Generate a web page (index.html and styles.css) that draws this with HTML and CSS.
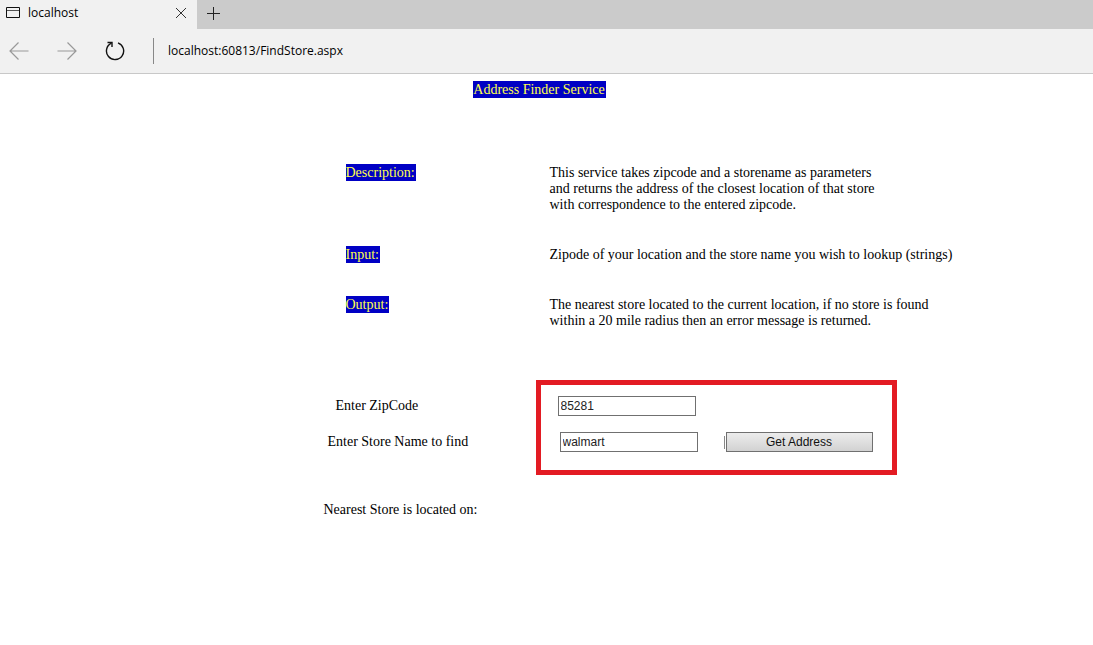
FILE: index.html
```html
<!DOCTYPE html>
<html lang="en">
<head>
<meta charset="utf-8">
<title>localhost</title>
<link rel="stylesheet" href="styles.css">
</head>
<body>
<header class="browser">
  <div class="tabs">
    <div class="tab">
      <svg class="tab-icon" width="14" height="12" viewBox="0 0 14 12" fill="none" stroke="#111"><path d="M.5.5h13v10H.5z"/><path d="M1 3.500h12" stroke="#555"/></svg>
      <span class="tab-title">localhost</span>
      <button class="icon-button" type="button" aria-label="Close tab"><svg width="12" height="12" viewBox="0 0 12 12" fill="none" stroke="#333"><path d="M1 1l10 10M11 1L1 11"/></svg></button>
    </div>
    <button class="icon-button new-tab" type="button" aria-label="New tab"><svg width="13" height="13" viewBox="0 0 13 13" fill="none" stroke="#222"><path d="M0 6.500h13M6.500 0v13"/></svg></button>
  </div>
  <nav class="toolbar">
    <button class="icon-button" type="button" aria-label="Back"><svg width="20" height="18" viewBox="0 0 20 18" fill="none" stroke="#999" stroke-width="1.2"><path d="M19.500 9H1M9.500 .5L1 9l8.500 8.500"/></svg></button>
    <button class="icon-button" type="button" aria-label="Forward"><svg width="20" height="18" viewBox="0 0 20 18" fill="none" stroke="#999" stroke-width="1.2"><path d="M.5 9H19M10.500 .5L19 9l-8.500 8.500"/></svg></button>
    <button class="icon-button" type="button" aria-label="Refresh"><svg width="20" height="20" viewBox="0 0 20 20" fill="none" stroke="#111" stroke-width="1.400"><path d="M13 1.900A8.600 8.600 0 1 1 6.400 2.200"/><path d="M2.500 1.500H7V6"/></svg></button>
    <span class="address">localhost:60813/FindStore.aspx</span>
  </nav>
</header>
<main class="page">
  <h1 class="title"><span class="mark">Address Finder Service</span></h1>
  <div class="content">
    <dl class="details">
      <dt><span class="mark">Description:</span></dt>
      <dd>This service takes zipcode and a storename as parameters<br>and returns the address of the closest location of that store<br>with correspondence to the entered zipcode.</dd>
      <dt><span class="mark">Input:</span></dt>
      <dd>Zipode of your location and the store name you wish to lookup (strings)</dd>
      <dt><span class="mark">Output:</span></dt>
      <dd>The nearest store located to the current location, if no store is found<br>within a 20 mile radius then an error message is returned.</dd>
    </dl>
    <form class="lookup">
      <div class="labels">
        <label class="zip-label" for="zip">Enter ZipCode</label>
        <label class="store-label" for="store">Enter Store Name to find</label>
      </div>
      <div class="frame">
        <div class="row"><input class="field" id="zip" type="text" value="85281"></div>
        <div class="row store-row"><input class="field" id="store" type="text" value="walmart"><span class="divider"></span><button class="submit" type="button">Get Address</button></div>
      </div>
    </form>
    <p class="result">Nearest Store is located on:</p>
  </div>
</main>
</body>
</html>
```

FILE: styles.css
```css
* {
  box-sizing: border-box;
}

body {
  margin: 0;
  background: #fff;
  color: #000;
  font: 14px/16px "Liberation Serif", "Times New Roman", serif;
}

.browser {
  background: #f1f1f1;
  border-bottom: 1px solid #c8c8c8;
  font: 12px/18px "Open Sans", "Noto Sans", sans-serif;
}

.icon-button {
  display: flex;
  padding: 0;
  border: 0;
  background: none;
}

.tabs {
  display: flex;
  align-items: center;
  height: 29px;
  background: #cbcbcb;
}

.tab {
  display: flex;
  align-items: center;
  gap: 8px;
  width: 197px;
  height: 29px;
  padding: 0 10px 4px 6px;
  background: #f1f1f1;
}

.tab-title {
  flex: 1;
}

.new-tab {
  margin-left: 10px;
  padding-bottom: 2px;
}

.toolbar {
  display: flex;
  align-items: center;
  gap: 28px;
  height: 44px;
  padding: 0 9px;
}

.address {
  padding: 4px 14px;
  border-left: 1px solid #888;
}

.page {
  padding: 8px 14px 0 0;
}

.title {
  margin: 0;
  font-size: 14px;
  font-weight: normal;
  text-align: center;
}

.mark {
  padding: 1px 1px 1px 0;
  background: #0000c4;
  color: #ffff4d;
}

.content {
  margin-left: calc(50% - 216px);
}

.details {
  display: grid;
  grid-template-columns: 204px 1fr;
  row-gap: 34px;
  margin: 67px 0 0;
  padding-left: 22px;
}

.details dd {
  margin: 0;
}

.lookup {
  display: flex;
  margin-top: 51px;
}

.labels {
  display: flex;
  flex-direction: column;
  gap: 20px;
  width: 212px;
  padding-top: 18px;
}

.zip-label {
  padding-left: 12px;
}

.store-label {
  padding-left: 4px;
}

.frame {
  display: flex;
  flex-direction: column;
  gap: 16px;
  padding: 11px 19px 18px 17px;
  border: 5px solid #e31b23;
}

.row {
  display: flex;
  align-items: center;
}

.store-row {
  padding-left: 2px;
}

.field {
  width: 138px;
  height: 20px;
  padding: 0 2px;
  border: 1px solid #707070;
  background: #fff;
  color: #222;
  font: 12px "Liberation Sans", Arial, sans-serif;
}

.divider {
  width: 1px;
  height: 13px;
  margin: 0 1px 0 26px;
  background: #888;
}

.submit {
  width: 147px;
  height: 20px;
  padding: 0;
  border: 1px solid #707070;
  background: linear-gradient(#ececec, #d2d2d2);
  color: #111;
  font: 12px "Liberation Sans", Arial, sans-serif;
}

.result {
  margin: 27px 0 0;
}
```
